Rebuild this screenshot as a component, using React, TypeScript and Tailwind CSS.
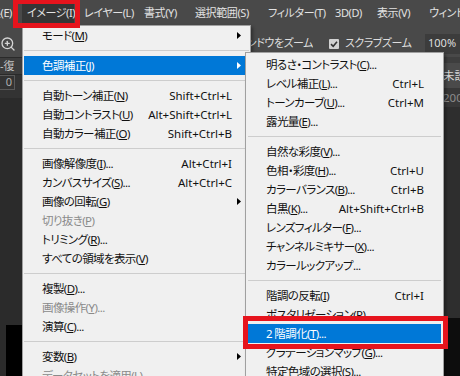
import { ZoomIn } from "lucide-react";
import clsx from "clsx";

type Entry =
  | { sep: true }
  | { label: string; k?: string; dots?: boolean; sc?: string; arrow?: boolean; off?: boolean; on?: boolean };

const mainMenu: Entry[] = [
  { label: "モード", k: "M", arrow: true },
  { sep: true },
  { label: "色調補正", k: "J", arrow: true, on: true },
  { sep: true },
  { label: "自動トーン補正", k: "N", sc: "Shift+Ctrl+L" },
  { label: "自動コントラスト", k: "U", sc: "Alt+Shift+Ctrl+L" },
  { label: "自動カラー補正", k: "O", sc: "Shift+Ctrl+B" },
  { sep: true },
  { label: "画像解像度", k: "I", dots: true, sc: "Alt+Ctrl+I" },
  { label: "カンバスサイズ", k: "S", dots: true, sc: "Alt+Ctrl+C" },
  { label: "画像の回転", k: "G", arrow: true },
  { label: "切り抜き", k: "P", off: true },
  { label: "トリミング", k: "R", dots: true },
  { label: "すべての領域を表示", k: "V" },
  { sep: true },
  { label: "複製", k: "D", dots: true },
  { label: "画像操作", k: "Y", dots: true, off: true },
  { label: "演算", k: "C", dots: true },
  { sep: true },
  { label: "変数", k: "B", arrow: true },
  { label: "データセットを適用", k: "L", dots: true, off: true },
];

const adjustMenu: Entry[] = [
  { label: "明るさ・コントラスト", k: "C", dots: true },
  { label: "レベル補正", k: "L", dots: true, sc: "Ctrl+L" },
  { label: "トーンカーブ", k: "U", dots: true, sc: "Ctrl+M" },
  { label: "露光量", k: "E", dots: true },
  { sep: true },
  { label: "自然な彩度", k: "V", dots: true },
  { label: "色相・彩度", k: "H", dots: true, sc: "Ctrl+U" },
  { label: "カラーバランス", k: "B", dots: true, sc: "Ctrl+B" },
  { label: "白黒", k: "K", dots: true, sc: "Alt+Shift+Ctrl+B" },
  { label: "レンズフィルター", k: "F", dots: true },
  { label: "チャンネルミキサー", k: "X", dots: true },
  { label: "カラールックアップ", dots: true },
  { sep: true },
  { label: "階調の反転", k: "I", sc: "Ctrl+I" },
  { label: "ポスタリゼーション", k: "P", dots: true },
  { label: "2 階調化", k: "T", dots: true, on: true },
  { label: "グラデーションマップ", k: "G", dots: true },
  { label: "特定色域の選択", k: "S", dots: true },
];

const topItems = [
  { label: "レイヤー(L)", w: "w-[60px]" },
  { label: "書式(Y)", w: "w-[51px]" },
  { label: "選択範囲(S)", w: "w-[73px]" },
  { label: "フィルター(T)", w: "w-[67px]" },
  { label: "3D(D)", w: "w-[42px]" },
  { label: "表示(V)", w: "w-[52px]" },
  { label: "ウィンドウ(W)", w: "w-[60px]" },
];

function Arrow({ white }: { white?: boolean }) {
  return (
    <svg width="4" height="7" viewBox="0 0 4 7" className="ml-[5px]">
      <path d="M0 0L4 3.5L0 7Z" fill={white ? "#ffffff" : "#000000"} />
    </svg>
  );
}

function MenuRows({ items }: { items: Entry[] }) {
  return (
    <>
      {items.map((it, i) =>
        "sep" in it ? (
          <div key={i} className="flex h-[11px] items-center">
            <div className="h-px w-full bg-[#cdcdcd]" />
          </div>
        ) : (
          <div
            key={i}
            className={clsx(
              "flex h-[19px] items-center pl-[18px]",
              it.on ? "bg-[#0078d7] text-white" : it.off ? "text-[#8a8a8a]" : "text-[#111111]"
            )}
          >
            <span className="flex-1 whitespace-nowrap tracking-[-0.6px]">
              {it.label}
              {it.k && (
                <>
                  (<u className="underline-offset-[1px]">{it.k}</u>)
                </>
              )}
              {it.dots && "..."}
            </span>
            {it.sc && <span className="whitespace-nowrap">{it.sc}</span>}
            <span className="flex w-[17px] shrink-0 items-center">{it.arrow && <Arrow white={it.on} />}</span>
          </div>
        )
      )}
    </>
  );
}

export default function App() {
  return (
    <div className="relative h-[376px] w-[460px] overflow-hidden bg-[#282828] font-['Noto_Sans','Noto_Sans_CJK_JP',sans-serif] text-[11.5px] [font-feature-settings:'palt']">
      {/* menu bar */}
      <div className="flex h-[27px] items-center bg-[#494949] text-[11px] tracking-[-0.4px] text-[#e2e2e2]">
        <div className="flex w-[21px] shrink-0 justify-end overflow-hidden pr-[9px]">
          <span className="whitespace-nowrap">編集(E)</span>
        </div>
        <div className="w-[57px] shrink-0 pl-[1px]">
          <span className="inline-block w-[52px] whitespace-nowrap bg-[#363636] py-[2px] pl-[5px]">イメージ(I)</span>
        </div>
        {topItems.map((t) => (
          <div key={t.label} className={clsx("shrink-0 overflow-hidden whitespace-nowrap pl-[6px]", t.w)}>
            {t.label}
          </div>
        ))}
      </div>

      {/* options bar */}
      <div className="flex h-[30px] items-center bg-[#494949] pt-[3px] text-[11px] tracking-[-0.5px] text-[#dedede]">
        <ZoomIn size={16} strokeWidth={2} className="shrink-0 text-[#d4d4d4]" />
        <div className="flex w-[297px] shrink-0 justify-end overflow-hidden">
          <span className="whitespace-nowrap">全ウィンドウをズーム</span>
        </div>
        <span className="ml-[16px] flex h-[10px] w-[10px] shrink-0 items-center justify-center rounded-[1px] bg-[#d2d2d2]">
          <svg width="8" height="8" viewBox="0 0 8 8">
            <path d="M1 4.2L3.2 6.3L7 1.8" fill="none" stroke="#333333" strokeWidth="1.6" />
          </svg>
        </span>
        <div className="ml-[6px] w-[80px] shrink-0 overflow-hidden">
          <span className="whitespace-nowrap">スクラブズーム</span>
        </div>
        <span className="flex h-[20px] w-[50px] shrink-0 items-center bg-[#3c3c3c] pl-[3px] tracking-normal">100%</span>
      </div>

      {/* workspace */}
      <div className="flex h-[319px]">
        <div className="flex w-[22px] shrink-0 flex-col text-[11px]">
          <div className="h-px bg-[#2a2a2a]" />
          <div className="flex h-[16px] items-center overflow-hidden bg-[#3d3d3d] text-[#c4c4c4]">
            <span className="whitespace-nowrap">-復</span>
          </div>
          <div className="h-px bg-[#2a2a2a]" />
          <div className="flex h-[23px] items-start bg-[#333333]">
            <div className="flex h-[15px] w-[15px] items-center justify-end border border-l-0 border-[#595959] pr-[2px] text-[#b0b0b0]">
              0
            </div>
          </div>
          <div className="flex-1 bg-[#2b2b2b]" />
          <div className="flex h-[51px] bg-[#2b2b2b] pl-[6px]">
            <div className="flex-1 bg-black" />
          </div>
        </div>
        <div className="flex-1 bg-[#282828]" />
        <div className="flex w-[17px] shrink-0 flex-col overflow-hidden">
          <div className="h-[6px] bg-[#3e3e3e]" />
          <div className="flex h-[25px] items-center bg-[#4a4a4a] text-[#d6d6d6]">
            <span className="whitespace-nowrap">未設定-1</span>
          </div>
          <div className="flex h-[19px] items-center bg-[#383838] text-[#8c8c8c]">
            <span className="whitespace-nowrap">200</span>
          </div>
          <div className="flex-1 bg-[#2e2e2e]" />
          <div className="h-[58px] bg-[#0d0d0d]" />
        </div>
      </div>

      {/* Image menu */}
      <div className="absolute left-[22px] top-[25px] h-[360px] w-[229px] border border-[#a0a0a0] bg-[#f0f0f0] px-[1px] shadow-[2px_2px_3px_rgba(0,0,0,0.35)]">
        <MenuRows items={mainMenu} />
      </div>

      {/* 色調補正 submenu */}
      <div className="absolute left-[245px] top-[52px] h-[340px] w-[199px] border border-[#a0a0a0] bg-[#f0f0f0] px-[2px] pt-[2px] shadow-[2px_2px_3px_rgba(0,0,0,0.35)]">
        <MenuRows items={adjustMenu} />
      </div>

      {/* annotations */}
      <div className="absolute left-[13px] top-[-1px] h-[29px] w-[67px] border-[5px] border-[#e6141d]" />
      <div className="absolute left-[243px] top-[316px] h-[33px] w-[205px] border-[5px] border-[#e6141d]" />
    </div>
  );
}
